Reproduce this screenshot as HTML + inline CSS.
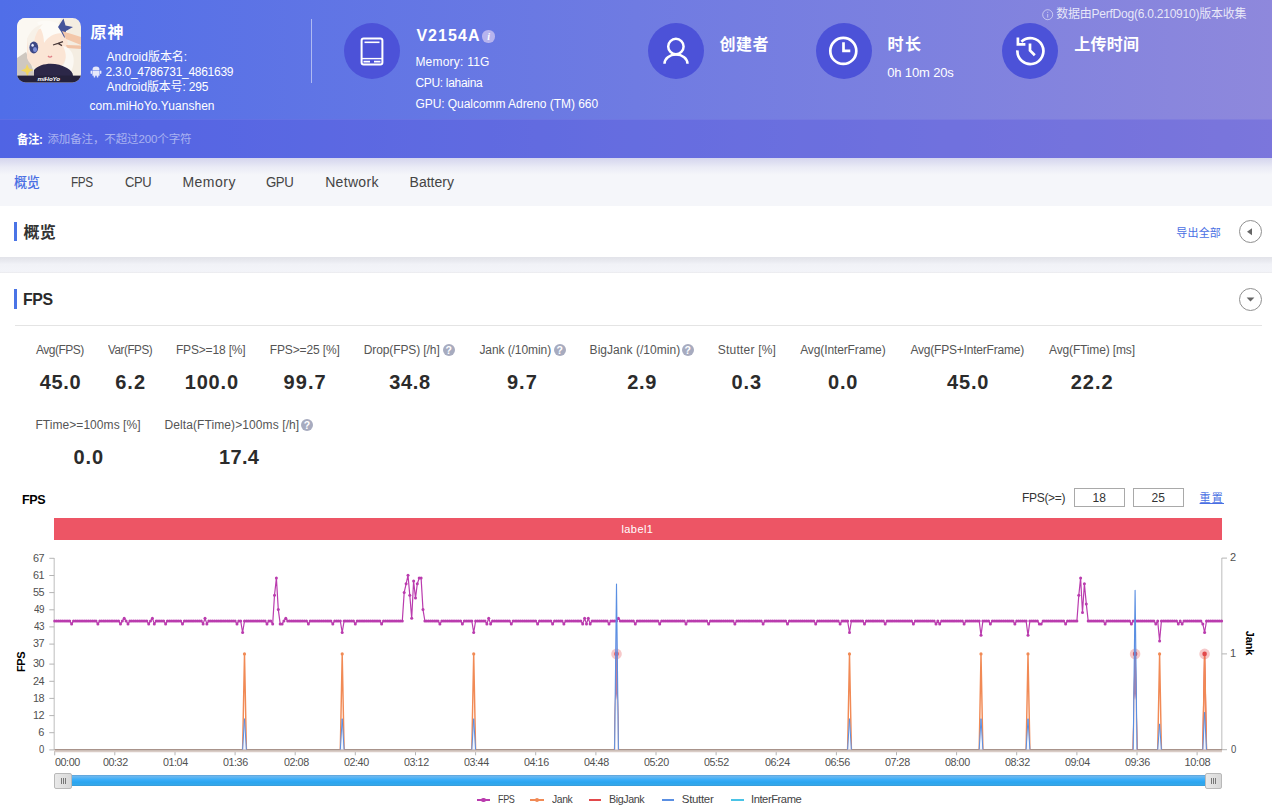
<!DOCTYPE html>
<html lang="zh-CN">
<head>
<meta charset="utf-8">
<title>PerfDog</title>
<style>
*{box-sizing:border-box;margin:0;padding:0}
html,body{width:1272px;height:809px;overflow:hidden;background:#fff}
body{font-family:"Liberation Sans","Noto Sans CJK SC",sans-serif;color:#333;position:relative}
.a{position:absolute}
.t{position:absolute;white-space:nowrap;line-height:1}
#hdr{left:0;top:0;width:1272px;height:158px;background:linear-gradient(90deg,#506ee8,#8e88dc)}
#remark{left:0;top:118.5px;width:1272px;height:39px;background:rgba(80,78,220,.31);border-top:1px solid rgba(255,255,255,.07)}
#hshadow{left:0;top:158px;width:1272px;height:17px;background:linear-gradient(180deg,rgba(110,110,200,.24) 0,rgba(110,110,200,.17) 25%,rgba(110,110,200,.08) 55%,rgba(110,110,200,0) 100%)}
.circ{width:56px;height:56px;border-radius:50%;background:#4c52d8}
#nav{left:0;top:157.5px;width:1272px;height:48px;background:#f5f6fa}
#sec1{left:0;top:205.5px;width:1272px;height:51.5px;background:#fff}
#gap{left:0;top:257px;width:1272px;height:15.6px;background:linear-gradient(180deg,#e2e3e9 0,#e9eaf0 25%,#f1f2f7 45%,#f3f4f9 90%,#e9e9ed 100%)}
.bar{width:3px;background:#4a74e6}
.q{width:12px;height:12px;border-radius:50%;background:#a7abbf;color:#fff;font-size:10.5px;font-weight:bold;line-height:12px;text-align:center}
.cbtn{width:23px;height:23px;border-radius:50%;border:1px solid #8f8f8f;background:#fff}
.inp{height:19px;width:51px;border:1px solid #a9a9a9;background:#fff}
.grip{width:17.5px;height:16px;background:linear-gradient(90deg,#e9e9e9,#d8d8d8);border:1px solid #b9b9b9;border-radius:2px}
.grip:after{content:"";position:absolute;left:5.5px;top:4.5px;width:1px;height:6px;background:#777;box-shadow:2px 0 0 #777,4px 0 0 #777}
</style>
</head>
<body>

<div class="a" id="hdr"></div>
<div class="a" id="remark"></div>
<div class="a" id="nav"></div>
<div class="a" id="hshadow"></div>
<div class="a" id="sec1"></div>
<div class="a" id="gap"></div>

<!-- app icon -->
<svg class="a" style="left:17px;top:18px" width="64" height="65" viewBox="0 0 64 65">
<defs><clipPath id="ic"><rect x="0" y="0" width="64" height="64.5" rx="8.5"/></clipPath></defs>
<g clip-path="url(#ic)">
<rect width="64" height="65" fill="#f4ede2"/>
<path d="M0 0H44L40 10C30 6 18 12 12 24L8 44L0 50Z" fill="#fbf8f2"/>
<path d="M0 40L9 34L14 46L18 58H0Z" fill="#cfc8c0"/>
<path d="M10 22C14 10 34 6 46 14C54 22 52 42 42 50C32 56 14 52 10 40Z" fill="#fbe5d5"/>
<path d="M20 4C34 0 48 6 54 20C46 12 34 14 27 25C27 15 23 9 20 4Z" fill="#fdfbf7"/>
<path d="M10 22C12 14 18 8 26 6C20 12 17 20 17 26L12 36Z" fill="#f7f1e8"/>
<ellipse cx="16.8" cy="29.6" rx="4.4" ry="6" fill="#3d4784"/>
<ellipse cx="18" cy="31.5" rx="2" ry="2.6" fill="#7f8fd8"/>
<ellipse cx="15.6" cy="27.2" rx="1.2" ry="1.5" fill="#e8ecff"/>
<path d="M36 27L41 25.4L46 23.6M41 25.4L45 27.6" stroke="#4a3a3a" stroke-width="1.2" fill="none"/>
<path d="M31 38Q33 40.4 35 38" stroke="#e07f86" stroke-width="1.3" fill="none"/>
<path d="M41 9L46.5 0.5L48.5 7.5L56 9L49 13L47.5 20L44 13.5Z" fill="#44549a"/>
<path d="M45 13L64 19V27L49 21Z" fill="#f3c7aa"/>
<path d="M49 27L64 27.5V31L50 30Z" fill="#f1c3a6"/>
<path d="M46 28C56 30 60 42 54 54L44 50C50 44 50 36 46 28Z" fill="#fbf8f3"/>
<path d="M17 52C24 44 40 44 50 50C54 52 56 55 56 58H17Z" fill="#2c2748"/>
<path d="M10 46L12 50.5L16.5 52L12 54L10.5 58.5L8.5 54L4 52.5L8.5 50.5Z" fill="#f2d65f"/>
<rect x="0" y="57.6" width="64" height="8" fill="#25213b"/>
</g>
</svg>
<div class="t" style="left:37.5px;top:75.8px;font-size:6.2px;font-weight:bold;font-style:italic;color:#fff;letter-spacing:-.1px">miHoYo</div>
<!-- android icon -->
<svg class="a" style="left:89.5px;top:65.5px" width="12" height="12" viewBox="0 0 12 12"><g fill="#e6e8fb">
<path d="M2.4 4.4H9.6V9.2Q9.6 9.8 9 9.8H3Q2.4 9.8 2.4 9.2Z"/><path d="M2.5 3.9A3.5 3.3 0 0 1 9.5 3.9Z"/>
<rect x=".6" y="4.4" width="1.4" height="3.6" rx=".7"/><rect x="10" y="4.4" width="1.4" height="3.6" rx=".7"/>
<rect x="3.7" y="9" width="1.5" height="2.6" rx=".7"/><rect x="6.8" y="9" width="1.5" height="2.6" rx=".7"/></g></svg>
<div class="a" style="left:311px;top:18.5px;width:1px;height:64px;background:rgba(255,255,255,.5)"></div>
<!-- circles -->
<div class="a circ" style="left:344px;top:23px"></div>
<div class="a circ" style="left:648px;top:23px"></div>
<div class="a circ" style="left:816px;top:23px"></div>
<div class="a circ" style="left:1002px;top:23px"></div>
<!-- device icon -->
<svg class="a" style="left:344px;top:23px" width="56" height="56" viewBox="0 0 56 56" fill="none" stroke="#fff" stroke-width="2">
<rect x="17.6" y="15.5" width="20.8" height="26" rx="2"/><path d="M20.5 19.3H35.5" stroke-width="1.6"/><path d="M18 35.6H38" stroke-width="1.4"/><path d="M19.5 38.6H26M30 38.6H36.5" stroke-width="1.6"/></svg>
<!-- user icon -->
<svg class="a" style="left:648px;top:23px" width="56" height="56" viewBox="0 0 56 56" fill="none" stroke="#fff" stroke-width="2.5">
<circle cx="27.9" cy="23.5" r="7.7"/><path d="M16.5 40.8A11.5 9.2 0 0 1 39.5 40.8"/></svg>
<!-- clock icon -->
<svg class="a" style="left:816px;top:23px" width="56" height="56" viewBox="0 0 56 56" fill="none" stroke="#fff" stroke-width="2.7">
<circle cx="27.3" cy="27.9" r="13"/><path d="M27.5 19.2V27.8H34.3"/></svg>
<!-- history icon -->
<svg class="a" style="left:1002px;top:23px" width="56" height="56" viewBox="0 0 56 56" fill="none" stroke="#fff" stroke-width="2.7">
<path d="M15.4 27.4A13 13 0 1 0 19.4 18.7"/><path d="M15.9 14.6V21.4H23.4"/><path d="M28 20.6V27.5L32.8 32.3"/></svg>
<!-- info icons -->
<div class="a" style="left:482.3px;top:30.2px;width:12.4px;height:12.4px;border-radius:50%;background:#b7b4ee"></div>
<div class="t" style="left:487.3px;top:31.6px;font-size:10px;font-style:italic;font-weight:bold;color:#fff;font-family:'Liberation Serif',serif">i</div>
<svg class="a" style="left:1042px;top:9px" width="12" height="12" viewBox="0 0 12 12" fill="none" stroke="rgba(255,255,255,.55)" stroke-width="1"><circle cx="5.7" cy="5.7" r="5"/><path d="M5.7 5V8.6M5.7 2.8V3.9"/></svg>

<div class="a bar" style="left:14px;top:222px;height:19px"></div>
<div class="a bar" style="left:14px;top:289px;height:20px"></div>
<div class="a cbtn" style="left:1239px;top:220px"></div>
<svg class="a" style="left:1239px;top:220px" width="23" height="23"><path d="M13 8.2V15.2L8 11.7Z" fill="#666"/></svg>
<div class="a cbtn" style="left:1239px;top:287.5px"></div>
<svg class="a" style="left:1239px;top:287.5px" width="23" height="23"><path d="M7.6 9.6H15.4L11.5 13.6Z" fill="#666"/></svg>
<div class="a" style="left:15px;top:325px;width:1247px;height:1px;background:#e4e4e4"></div>
<!-- question icons -->
<div class="a q" style="left:442.7px;top:343.7px">?</div>
<div class="a q" style="left:553.8px;top:343.7px">?</div>
<div class="a q" style="left:681.8px;top:343.7px">?</div>
<div class="a q" style="left:301px;top:418.7px">?</div>
<!-- inputs -->
<div class="a inp" style="left:1074px;top:488px"></div>
<div class="a inp" style="left:1133px;top:488px"></div>
<!-- label bar -->
<div class="a" style="left:54px;top:518px;width:1168px;height:22px;background:#ed5565"></div>
<!-- chart -->
<svg class="a" style="left:0;top:0" width="1272" height="809" viewBox="0 0 1272 809">
<defs><marker id="mk" markerWidth="4" markerHeight="4" refX="2" refY="2" markerUnits="userSpaceOnUse"><circle cx="2" cy="2" r="1.5" fill="#ba3cae"/></marker><linearGradient id="tg" gradientUnits="userSpaceOnUse" x1="0" y1="584" x2="0" y2="750"><stop offset="0" stop-color="#9678d7" stop-opacity=".2"/><stop offset=".2" stop-color="#9678d7" stop-opacity=".55"/><stop offset=".66" stop-color="#9678d7" stop-opacity=".55"/><stop offset=".7" stop-color="#f4f6ff" stop-opacity=".8"/><stop offset="1" stop-color="#fff" stop-opacity=".85"/></linearGradient></defs>
<path d="M54.2 558V750M1221.8 558V750" stroke="#c8c8c8" stroke-width="1.2" fill="none"/>
<path d="M49.3 558.3H54.2M49.3 575.5H54.2M49.3 592.6H54.2M49.3 609.8H54.2M49.3 626.9H54.2M49.3 644.1H54.2M49.3 664.1H54.2M49.3 681.3H54.2M49.3 698.4H54.2M49.3 715.6H54.2M49.3 732.7H54.2M49.3 749.9H54.2M1221.8 558.1H1227M1221.8 653.9H1227M1221.8 749.7H1227M54.7 751V755.3M114.8 751V755.3M175.0 751V755.3M235.1 751V755.3M295.2 751V755.3M355.3 751V755.3M415.5 751V755.3M475.6 751V755.3M535.7 751V755.3M595.9 751V755.3M656.0 751V755.3M716.1 751V755.3M776.2 751V755.3M836.4 751V755.3M896.5 751V755.3M956.6 751V755.3M1016.7 751V755.3M1076.9 751V755.3M1137.0 751V755.3M1197.1 751V755.3" stroke="#b4b4b4" stroke-width="1" fill="none"/>
<polyline points="54.7,621.0 56.6,621.0 58.5,621.0 60.3,621.0 62.2,621.0 64.1,621.0 66.0,621.0 67.9,621.0 69.7,621.0 71.6,623.9 73.5,621.0 75.4,621.0 77.2,621.0 79.1,621.0 81.0,621.0 82.9,621.0 84.8,621.0 86.6,621.0 88.5,621.0 90.4,621.0 92.3,621.0 94.2,621.0 96.0,621.0 97.9,623.9 99.8,621.0 101.7,621.0 103.6,621.0 105.4,621.0 107.3,621.0 109.2,621.0 111.1,621.0 112.9,621.0 114.8,621.0 116.7,621.0 118.6,621.0 120.5,623.9 122.3,621.0 124.2,618.2 126.1,621.0 128.0,623.9 129.9,621.0 131.7,621.0 133.6,621.0 135.5,621.0 137.4,621.0 139.3,621.0 141.1,621.0 143.0,621.0 144.9,621.0 146.8,621.0 148.7,623.9 150.5,621.0 152.4,618.2 154.3,623.9 156.2,621.0 158.0,621.0 159.9,621.0 161.8,621.0 163.7,621.0 165.6,623.9 167.4,621.0 169.3,621.0 171.2,621.0 173.1,621.0 175.0,621.0 176.8,621.0 178.7,621.0 180.6,621.0 182.5,623.9 184.4,621.0 186.2,621.0 188.1,621.0 190.0,621.0 191.9,621.0 193.7,621.0 195.6,621.0 197.5,621.0 199.4,621.0 201.3,621.0 203.1,623.9 205.0,618.2 206.9,623.9 208.8,621.0 210.7,621.0 212.5,621.0 214.4,621.0 216.3,621.0 218.2,621.0 220.1,621.0 221.9,621.0 223.8,621.0 225.7,621.0 227.6,621.0 229.4,621.0 231.3,621.0 233.2,621.0 235.1,621.0 237.0,623.9 238.8,621.0 240.7,621.0 242.6,632.5 244.5,621.0 246.4,621.0 248.2,621.0 250.1,621.0 252.0,621.0 253.9,621.0 255.8,621.0 257.6,621.0 259.5,621.0 261.4,621.0 263.3,621.0 265.1,621.0 267.0,623.9 268.9,621.0 270.8,621.0 272.7,623.9 274.5,595.3 276.4,578.1 278.3,609.6 280.2,623.9 282.1,623.9 283.9,621.0 285.8,618.2 287.7,621.0 289.6,621.0 291.5,621.0 293.3,621.0 295.2,621.0 297.1,621.0 299.0,621.0 300.8,621.0 302.7,621.0 304.6,621.0 306.5,621.0 308.4,623.9 310.2,621.0 312.1,621.0 314.0,621.0 315.9,621.0 317.8,621.0 319.6,621.0 321.5,621.0 323.4,621.0 325.3,621.0 327.2,621.0 329.0,621.0 330.9,621.0 332.8,623.9 334.7,621.0 336.6,621.0 338.4,621.0 340.3,621.0 342.2,632.5 344.1,621.0 345.9,621.0 347.8,621.0 349.7,621.0 351.6,621.0 353.5,621.0 355.3,623.9 357.2,621.0 359.1,621.0 361.0,621.0 362.9,621.0 364.7,621.0 366.6,621.0 368.5,621.0 370.4,621.0 372.3,621.0 374.1,621.0 376.0,621.0 377.9,621.0 379.8,621.0 381.6,623.9 383.5,621.0 385.4,621.0 387.3,621.0 389.2,621.0 391.0,621.0 392.9,621.0 394.8,621.0 396.7,621.0 398.6,621.0 400.4,621.0 402.3,621.0 404.2,592.4 406.1,583.8 408.0,575.3 409.8,595.3 411.7,618.2 413.6,581.0 415.5,598.1 417.3,583.8 419.2,578.1 421.1,578.1 423.0,609.6 424.9,621.0 426.7,621.0 428.6,621.0 430.5,621.0 432.4,621.0 434.3,621.0 436.1,621.0 438.0,621.0 439.9,623.9 441.8,621.0 443.7,621.0 445.5,621.0 447.4,621.0 449.3,621.0 451.2,621.0 453.0,621.0 454.9,621.0 456.8,621.0 458.7,621.0 460.6,621.0 462.4,623.9 464.3,621.0 466.2,621.0 468.1,621.0 470.0,621.0 471.8,621.0 473.7,632.5 475.6,621.0 477.5,621.0 479.4,621.0 481.2,621.0 483.1,621.0 485.0,621.0 486.9,623.9 488.7,618.2 490.6,623.9 492.5,621.0 494.4,621.0 496.3,621.0 498.1,621.0 500.0,621.0 501.9,621.0 503.8,621.0 505.7,621.0 507.5,621.0 509.4,621.0 511.3,623.9 513.2,621.0 515.1,621.0 516.9,621.0 518.8,621.0 520.7,621.0 522.6,621.0 524.5,621.0 526.3,621.0 528.2,621.0 530.1,621.0 532.0,621.0 533.8,621.0 535.7,621.0 537.6,623.9 539.5,621.0 541.4,621.0 543.2,621.0 545.1,621.0 547.0,621.0 548.9,621.0 550.8,621.0 552.6,623.9 554.5,621.0 556.4,621.0 558.3,621.0 560.2,621.0 562.0,621.0 563.9,623.9 565.8,621.0 567.7,621.0 569.5,621.0 571.4,621.0 573.3,621.0 575.2,621.0 577.1,621.0 578.9,621.0 580.8,621.0 582.7,623.9 584.6,618.2 586.5,623.9 588.3,618.2 590.2,623.9 592.1,621.0 594.0,621.0 595.9,621.0 597.7,621.0 599.6,621.0 601.5,621.0 603.4,621.0 605.2,621.0 607.1,621.0 609.0,623.9 610.9,621.0 612.8,621.0 614.6,621.0 616.5,621.0 618.4,618.2 620.3,621.0 622.2,621.0 624.0,621.0 625.9,621.0 627.8,621.0 629.7,621.0 631.6,621.0 633.4,621.0 635.3,623.9 637.2,621.0 639.1,621.0 640.9,621.0 642.8,621.0 644.7,621.0 646.6,621.0 648.5,621.0 650.3,621.0 652.2,621.0 654.1,621.0 656.0,621.0 657.9,621.0 659.7,623.9 661.6,621.0 663.5,621.0 665.4,621.0 667.3,621.0 669.1,621.0 671.0,621.0 672.9,621.0 674.8,621.0 676.6,621.0 678.5,621.0 680.4,621.0 682.3,621.0 684.2,621.0 686.0,623.9 687.9,621.0 689.8,621.0 691.7,621.0 693.6,621.0 695.4,621.0 697.3,621.0 699.2,621.0 701.1,621.0 703.0,621.0 704.8,621.0 706.7,621.0 708.6,623.9 710.5,621.0 712.4,621.0 714.2,621.0 716.1,621.0 718.0,621.0 719.9,621.0 721.7,621.0 723.6,621.0 725.5,621.0 727.4,621.0 729.3,621.0 731.1,621.0 733.0,621.0 734.9,623.9 736.8,621.0 738.7,621.0 740.5,621.0 742.4,621.0 744.3,621.0 746.2,621.0 748.1,621.0 749.9,621.0 751.8,621.0 753.7,621.0 755.6,621.0 757.4,621.0 759.3,621.0 761.2,621.0 763.1,623.9 765.0,621.0 766.8,621.0 768.7,621.0 770.6,621.0 772.5,621.0 774.4,621.0 776.2,621.0 778.1,621.0 780.0,621.0 781.9,621.0 783.8,621.0 785.6,621.0 787.5,623.9 789.4,621.0 791.3,621.0 793.1,621.0 795.0,621.0 796.9,621.0 798.8,621.0 800.7,621.0 802.5,621.0 804.4,621.0 806.3,621.0 808.2,621.0 810.1,621.0 811.9,621.0 813.8,621.0 815.7,623.9 817.6,621.0 819.5,621.0 821.3,621.0 823.2,621.0 825.1,621.0 827.0,621.0 828.8,621.0 830.7,621.0 832.6,621.0 834.5,621.0 836.4,621.0 838.2,621.0 840.1,623.9 842.0,621.0 843.9,621.0 845.8,621.0 847.6,621.0 849.5,632.5 851.4,621.0 853.3,621.0 855.2,621.0 857.0,621.0 858.9,621.0 860.8,621.0 862.7,621.0 864.5,623.9 866.4,621.0 868.3,621.0 870.2,621.0 872.1,621.0 873.9,621.0 875.8,621.0 877.7,621.0 879.6,621.0 881.5,621.0 883.3,621.0 885.2,623.9 887.1,621.0 889.0,621.0 890.9,621.0 892.7,621.0 894.6,621.0 896.5,621.0 898.4,621.0 900.2,621.0 902.1,621.0 904.0,621.0 905.9,621.0 907.8,621.0 909.6,621.0 911.5,621.0 913.4,623.9 915.3,621.0 917.2,621.0 919.0,621.0 920.9,621.0 922.8,621.0 924.7,621.0 926.6,621.0 928.4,621.0 930.3,621.0 932.2,621.0 934.1,621.0 936.0,623.9 937.8,621.0 939.7,623.9 941.6,621.0 943.5,621.0 945.3,621.0 947.2,621.0 949.1,621.0 951.0,621.0 952.9,621.0 954.7,621.0 956.6,621.0 958.5,621.0 960.4,621.0 962.3,621.0 964.1,623.9 966.0,621.0 967.9,621.0 969.8,621.0 971.7,621.0 973.5,621.0 975.4,621.0 977.3,621.0 979.2,621.0 981.0,635.3 982.9,621.0 984.8,621.0 986.7,621.0 988.6,621.0 990.4,623.9 992.3,621.0 994.2,621.0 996.1,621.0 998.0,621.0 999.8,621.0 1001.7,621.0 1003.6,621.0 1005.5,621.0 1007.4,621.0 1009.2,621.0 1011.1,621.0 1013.0,621.0 1014.9,623.9 1016.7,621.0 1018.6,621.0 1020.5,621.0 1022.4,621.0 1024.3,621.0 1026.1,621.0 1028.0,635.3 1029.9,621.0 1031.8,621.0 1033.7,621.0 1035.5,621.0 1037.4,621.0 1039.3,623.9 1041.2,623.9 1043.1,621.0 1044.9,621.0 1046.8,621.0 1048.7,621.0 1050.6,621.0 1052.4,621.0 1054.3,621.0 1056.2,621.0 1058.1,621.0 1060.0,621.0 1061.8,621.0 1063.7,621.0 1065.6,623.9 1067.5,621.0 1069.4,621.0 1071.2,621.0 1073.1,621.0 1075.0,621.0 1076.9,621.0 1078.8,595.3 1080.6,578.1 1082.5,612.4 1084.4,583.8 1086.3,603.9 1088.2,621.0 1090.0,621.0 1091.9,621.0 1093.8,621.0 1095.7,621.0 1097.5,621.0 1099.4,621.0 1101.3,621.0 1103.2,621.0 1105.1,623.9 1106.9,621.0 1108.8,621.0 1110.7,621.0 1112.6,621.0 1114.5,621.0 1116.3,621.0 1118.2,621.0 1120.1,621.0 1122.0,621.0 1123.9,621.0 1125.7,621.0 1127.6,621.0 1129.5,621.0 1131.4,623.9 1133.2,621.0 1135.1,621.0 1137.0,621.0 1138.9,621.0 1140.8,621.0 1142.6,621.0 1144.5,621.0 1146.4,621.0 1148.3,621.0 1150.2,621.0 1152.0,621.0 1153.9,621.0 1155.8,623.9 1157.7,621.0 1159.6,641.0 1161.4,621.0 1163.3,621.0 1165.2,621.0 1167.1,621.0 1168.9,621.0 1170.8,621.0 1172.7,621.0 1174.6,621.0 1176.5,621.0 1178.3,623.9 1180.2,621.0 1182.1,623.9 1184.0,621.0 1185.9,621.0 1187.7,621.0 1189.6,621.0 1191.5,621.0 1193.4,621.0 1195.3,621.0 1197.1,621.0 1199.0,621.0 1200.9,621.0 1202.8,623.9 1204.6,632.5 1206.5,621.0 1208.4,621.0 1210.3,621.0 1212.2,621.0 1214.0,621.0 1215.9,621.0 1217.8,621.0 1219.7,621.0 1221.6,621.0" fill="none" stroke="#ba3cae" stroke-width="1.2" stroke-linejoin="round" marker-start="url(#mk)" marker-mid="url(#mk)" marker-end="url(#mk)"/>
<path d="M54.5 751.1H1222" stroke="#d9ccc6" stroke-width="2.2" fill="none"/><path d="M54.5 749.6H1222" stroke="#a8938b" stroke-width="1.3" fill="none"/>
<path d="M614.6 749.7L616.5 653.9L618.4 749.7M1133.2 749.7L1135.1 653.9L1137.0 749.7M1202.8 749.7L1204.6 653.9L1206.5 749.7" fill="none" stroke="#e2494b" stroke-width="1.3" stroke-linejoin="round"/>
<path d="M242.6 749.7L244.5 653.9L246.4 749.7M340.3 749.7L342.2 653.9L344.1 749.7M471.8 749.7L473.7 653.9L475.6 749.7M614.6 749.7L616.5 653.9L618.4 749.7M847.6 749.7L849.5 653.9L851.4 749.7M979.2 749.7L981.0 653.9L982.9 749.7M1026.1 749.7L1028.0 653.9L1029.9 749.7M1133.2 749.7L1135.1 653.9L1137.0 749.7M1157.7 749.7L1159.6 653.9L1161.4 749.7M1202.8 749.7L1204.6 653.9L1206.5 749.7" fill="none" stroke="#f18a55" stroke-width="1.45" stroke-linejoin="round"/>
<circle cx="244.5" cy="653.9" r="1.6" fill="#f18a55"/>
<circle cx="342.2" cy="653.9" r="1.6" fill="#f18a55"/>
<circle cx="473.7" cy="653.9" r="1.6" fill="#f18a55"/>
<circle cx="849.5" cy="653.9" r="1.6" fill="#f18a55"/>
<circle cx="981.0" cy="653.9" r="1.6" fill="#f18a55"/>
<circle cx="1028.0" cy="653.9" r="1.6" fill="#f18a55"/>
<circle cx="1159.6" cy="653.9" r="1.6" fill="#f18a55"/>
<circle cx="616.5" cy="653.9" r="5.3" fill="#e2494b" fill-opacity=".3"/><circle cx="616.5" cy="653.9" r="2.3" fill="#e2494b"/>
<circle cx="1135.1" cy="653.9" r="5.3" fill="#e2494b" fill-opacity=".3"/><circle cx="1135.1" cy="653.9" r="2.3" fill="#e2494b"/>
<circle cx="1204.6" cy="653.9" r="5.3" fill="#e2494b" fill-opacity=".3"/><circle cx="1204.6" cy="653.9" r="2.3" fill="#e2494b"/>
<path d="M242.6 749.7L244.5 718.7L246.4 749.7M340.3 749.7L342.2 718.7L344.1 749.7M471.8 749.7L473.7 718.7L475.6 749.7M847.6 749.7L849.5 718.7L851.4 749.7M979.2 749.7L981.0 718.7L982.9 749.7M1026.1 749.7L1028.0 718.7L1029.9 749.7M1157.7 749.7L1159.6 723.9L1161.4 749.7M1202.8 749.7L1204.6 712.2L1206.5 749.7" fill="rgba(235,242,255,.7)" stroke="#5a8fe2" stroke-width="1" stroke-linejoin="round"/>
<path d="M614.6 749.7L616.5 584.0L618.4 749.7M1133.2 749.7L1135.1 590.2L1137.0 749.7" fill="url(#tg)" stroke="#5a8fe2" stroke-width="1.1" stroke-linejoin="round"/>
</svg>
<!-- scrollbar -->
<div class="a" style="left:55px;top:775px;width:1166px;height:11px;background:linear-gradient(180deg,#5e9ed2 0,#6bb8f0 12%,#3aaef9 42%,#2ba5f0 66%,#33a8ea 88%,#3a98d4 100%)"></div>
<div class="a grip" style="left:54px;top:772.5px"></div>
<div class="a grip" style="left:1204.5px;top:772.5px"></div>
<div class="t" style="left:90.4px;top:24.5px;font-size:16px;letter-spacing:1.10px;color:#fff;font-weight:bold;">原神</div>
<div class="t" style="left:106.6px;top:51.0px;font-size:12px;letter-spacing:-0.01px;color:#fff;">Android版本名:</div>
<div class="t" style="left:105.6px;top:65.8px;font-size:12px;letter-spacing:-0.28px;color:#fff;">2.3.0_4786731_4861639</div>
<div class="t" style="left:106.6px;top:80.8px;font-size:12px;letter-spacing:-0.15px;color:#fff;">Android版本号: 295</div>
<div class="t" style="left:89.5px;top:100.0px;font-size:12px;letter-spacing:0.04px;color:#fff;">com.miHoYo.Yuanshen</div>
<div class="t" style="left:416.4px;top:28.1px;font-size:16px;letter-spacing:1.06px;color:#fff;font-weight:bold;">V2154A</div>
<div class="t" style="left:415.4px;top:56.4px;font-size:12px;letter-spacing:0.22px;color:#fff;">Memory: 11G</div>
<div class="t" style="left:415.4px;top:77.1px;font-size:12px;letter-spacing:-0.31px;color:#fff;">CPU: lahaina</div>
<div class="t" style="left:415.4px;top:97.9px;font-size:12px;letter-spacing:-0.05px;color:#fff;">GPU: Qualcomm Adreno (TM) 660</div>
<div class="t" style="left:719.4px;top:36.8px;font-size:16px;letter-spacing:0.60px;color:#fff;font-weight:bold;">创建者</div>
<div class="t" style="left:887.6px;top:37.0px;font-size:16px;letter-spacing:1.30px;color:#fff;font-weight:bold;">时长</div>
<div class="t" style="left:887.2px;top:66.3px;font-size:13px;letter-spacing:-0.14px;color:#fff;">0h 10m 20s</div>
<div class="t" style="left:1074.3px;top:37.3px;font-size:16px;letter-spacing:0.27px;color:#fff;font-weight:bold;">上传时间</div>
<div class="t" style="left:1056.2px;top:8.2px;font-size:12px;letter-spacing:-0.23px;color:rgba(255,255,255,.82);">数据由PerfDog(6.0.210910)版本收集</div>
<div class="t" style="left:16.6px;top:133.6px;font-size:12px;letter-spacing:-0.45px;color:#fff;font-weight:bold;transform:scaleX(0.950);transform-origin:0 0;">备注:</div>
<div class="t" style="left:47.5px;top:134.1px;font-size:11.5px;letter-spacing:-0.13px;color:rgba(255,255,255,.5);">添加备注，不超过200个字符</div>
<div class="t" style="left:14.2px;top:176.0px;font-size:13.5px;letter-spacing:-0.45px;color:#4a6fe3;font-weight:500;transform:scaleX(0.971);transform-origin:0 0;">概览</div>
<div class="t" style="left:70.9px;top:174.8px;font-size:14px;letter-spacing:-0.45px;color:#444;transform:scaleX(0.841);transform-origin:0 0;">FPS</div>
<div class="t" style="left:124.6px;top:174.8px;font-size:14px;letter-spacing:-0.45px;color:#444;transform:scaleX(0.926);transform-origin:0 0;">CPU</div>
<div class="t" style="left:182.4px;top:174.8px;font-size:14px;letter-spacing:0.50px;color:#444;">Memory</div>
<div class="t" style="left:266.3px;top:174.8px;font-size:14px;letter-spacing:-0.45px;color:#444;transform:scaleX(0.945);transform-origin:0 0;">GPU</div>
<div class="t" style="left:325.2px;top:174.8px;font-size:14px;letter-spacing:0.32px;color:#444;">Network</div>
<div class="t" style="left:409.6px;top:174.8px;font-size:14px;letter-spacing:0.00px;color:#444;">Battery</div>
<div class="t" style="left:23.6px;top:225.0px;font-size:16px;letter-spacing:0.10px;color:#333;font-weight:bold;">概览</div>
<div class="t" style="left:22.9px;top:290.8px;font-size:16.5px;letter-spacing:-0.45px;color:#2a2a2a;font-weight:bold;transform:scaleX(0.962);transform-origin:0 0;">FPS</div>
<div class="t" style="left:1176.3px;top:227.5px;font-size:11px;letter-spacing:0.17px;color:#4a6fe3;">导出全部</div>
<div class="t" style="left:36.0px;top:344.2px;font-size:12px;letter-spacing:-0.51px;color:#555;">Avg(FPS)</div>
<div class="t" style="left:108.2px;top:344.2px;font-size:12px;letter-spacing:-0.45px;color:#555;transform:scaleX(0.972);transform-origin:0 0;">Var(FPS)</div>
<div class="t" style="left:175.9px;top:344.2px;font-size:12px;letter-spacing:-0.16px;color:#555;">FPS&gt;=18 [%]</div>
<div class="t" style="left:269.7px;top:344.2px;font-size:12px;letter-spacing:-0.13px;color:#555;">FPS&gt;=25 [%]</div>
<div class="t" style="left:363.7px;top:344.2px;font-size:12px;letter-spacing:-0.10px;color:#555;">Drop(FPS) [/h]</div>
<div class="t" style="left:479.4px;top:344.2px;font-size:12px;letter-spacing:-0.08px;color:#555;">Jank (/10min)</div>
<div class="t" style="left:589.6px;top:344.2px;font-size:12px;letter-spacing:0.04px;color:#555;">BigJank (/10min)</div>
<div class="t" style="left:717.8px;top:344.2px;font-size:12px;letter-spacing:0.21px;color:#555;">Stutter [%]</div>
<div class="t" style="left:800.2px;top:344.2px;font-size:12px;letter-spacing:-0.12px;color:#555;">Avg(InterFrame)</div>
<div class="t" style="left:910.5px;top:344.2px;font-size:12px;letter-spacing:-0.21px;color:#555;">Avg(FPS+InterFrame)</div>
<div class="t" style="left:1049.0px;top:344.2px;font-size:12px;letter-spacing:-0.14px;color:#555;">Avg(FTime) [ms]</div>
<div class="t" style="left:35.4px;top:419.2px;font-size:12px;letter-spacing:0.06px;color:#555;">FTime&gt;=100ms [%]</div>
<div class="t" style="left:164.4px;top:419.2px;font-size:12px;letter-spacing:0.10px;color:#555;">Delta(FTime)&gt;100ms [/h]</div>
<div class="t" style="left:39.8px;top:371.6px;font-size:20px;letter-spacing:0.63px;color:#2b2b2b;font-weight:bold;">45.0</div>
<div class="t" style="left:115.2px;top:371.6px;font-size:20px;letter-spacing:1.05px;color:#2b2b2b;font-weight:bold;">6.2</div>
<div class="t" style="left:184.7px;top:371.6px;font-size:20px;letter-spacing:0.83px;color:#2b2b2b;font-weight:bold;">100.0</div>
<div class="t" style="left:283.6px;top:371.6px;font-size:20px;letter-spacing:1.03px;color:#2b2b2b;font-weight:bold;">99.7</div>
<div class="t" style="left:389.2px;top:371.6px;font-size:20px;letter-spacing:0.70px;color:#2b2b2b;font-weight:bold;">34.8</div>
<div class="t" style="left:506.9px;top:371.6px;font-size:20px;letter-spacing:1.05px;color:#2b2b2b;font-weight:bold;">9.7</div>
<div class="t" style="left:627.2px;top:371.6px;font-size:20px;letter-spacing:0.75px;color:#2b2b2b;font-weight:bold;">2.9</div>
<div class="t" style="left:731.5px;top:371.6px;font-size:20px;letter-spacing:0.95px;color:#2b2b2b;font-weight:bold;">0.3</div>
<div class="t" style="left:828.1px;top:371.6px;font-size:20px;letter-spacing:0.75px;color:#2b2b2b;font-weight:bold;">0.0</div>
<div class="t" style="left:947.0px;top:371.6px;font-size:20px;letter-spacing:0.83px;color:#2b2b2b;font-weight:bold;">45.0</div>
<div class="t" style="left:1070.8px;top:371.6px;font-size:20px;letter-spacing:0.93px;color:#2b2b2b;font-weight:bold;">22.2</div>
<div class="t" style="left:73.6px;top:446.6px;font-size:20px;letter-spacing:0.85px;color:#2b2b2b;font-weight:bold;">0.0</div>
<div class="t" style="left:219.0px;top:446.6px;font-size:20px;letter-spacing:0.33px;color:#2b2b2b;font-weight:bold;">17.4</div>
<div class="t" style="left:21.8px;top:492.9px;font-size:13px;letter-spacing:-0.45px;color:#000;font-weight:bold;transform:scaleX(0.965);transform-origin:0 0;">FPS</div>
<div class="t" style="left:1021.9px;top:491.8px;font-size:12px;letter-spacing:-0.28px;color:#333;">FPS(&gt;=)</div>
<div class="t" style="left:1092.5px;top:491.5px;font-size:12px;letter-spacing:0.00px;color:#333;">18</div>
<div class="t" style="left:1151.5px;top:491.5px;font-size:12px;letter-spacing:0.00px;color:#333;">25</div>
<div class="t" style="left:1199.6px;top:492.5px;font-size:11px;letter-spacing:1.20px;color:#4a6fe3;text-decoration:underline;">重置</div>
<div class="t" style="left:621.5px;top:523.8px;font-size:11px;letter-spacing:0.40px;color:#fff;">label1</div>
<div class="t" style="left:33.0px;top:552.5px;font-size:11px;letter-spacing:-0.45px;color:#505050;transform:scaleX(0.986);transform-origin:0 0;">67</div>
<div class="t" style="left:33.0px;top:569.7px;font-size:11px;letter-spacing:-0.45px;color:#505050;transform:scaleX(0.986);transform-origin:0 0;">61</div>
<div class="t" style="left:33.0px;top:586.8px;font-size:11px;letter-spacing:-0.45px;color:#505050;transform:scaleX(0.986);transform-origin:0 0;">55</div>
<div class="t" style="left:34.0px;top:604.0px;font-size:11px;letter-spacing:-0.45px;color:#505050;transform:scaleX(0.900);transform-origin:0 0;">49</div>
<div class="t" style="left:34.0px;top:621.1px;font-size:11px;letter-spacing:-0.45px;color:#505050;transform:scaleX(0.900);transform-origin:0 0;">43</div>
<div class="t" style="left:33.0px;top:638.3px;font-size:11px;letter-spacing:-0.45px;color:#505050;transform:scaleX(0.986);transform-origin:0 0;">37</div>
<div class="t" style="left:33.0px;top:658.3px;font-size:11px;letter-spacing:-0.45px;color:#505050;transform:scaleX(0.986);transform-origin:0 0;">30</div>
<div class="t" style="left:33.0px;top:675.5px;font-size:11px;letter-spacing:-0.45px;color:#505050;transform:scaleX(0.986);transform-origin:0 0;">24</div>
<div class="t" style="left:33.0px;top:692.6px;font-size:11px;letter-spacing:-0.45px;color:#505050;transform:scaleX(0.986);transform-origin:0 0;">18</div>
<div class="t" style="left:33.0px;top:709.8px;font-size:11px;letter-spacing:-0.45px;color:#505050;transform:scaleX(0.986);transform-origin:0 0;">12</div>
<div class="t" style="left:38.2px;top:726.9px;font-size:11px;letter-spacing:0.20px;color:#505050;">6</div>
<div class="t" style="left:39.2px;top:744.1px;font-size:11px;letter-spacing:-0.45px;color:#505050;transform:scaleX(0.867);transform-origin:0 0;">0</div>
<div class="t" style="left:1230.0px;top:552.3px;font-size:11px;letter-spacing:0.20px;color:#505050;">2</div>
<div class="t" style="left:1230.0px;top:648.1px;font-size:11px;letter-spacing:0.20px;color:#505050;">1</div>
<div class="t" style="left:1231.0px;top:743.8px;font-size:11px;letter-spacing:-0.45px;color:#505050;transform:scaleX(0.867);transform-origin:0 0;">0</div>
<div class="t" style="left:55.0px;top:757.2px;font-size:11px;letter-spacing:-0.45px;color:#505050;transform:scaleX(0.980);transform-origin:0 0;">00:00</div>
<div class="t" style="left:103.1px;top:757.2px;font-size:11px;letter-spacing:-0.45px;color:#505050;transform:scaleX(0.976);transform-origin:0 0;">00:32</div>
<div class="t" style="left:163.3px;top:757.2px;font-size:11px;letter-spacing:-0.45px;color:#505050;transform:scaleX(0.976);transform-origin:0 0;">01:04</div>
<div class="t" style="left:223.4px;top:757.2px;font-size:11px;letter-spacing:-0.45px;color:#505050;transform:scaleX(0.976);transform-origin:0 0;">01:36</div>
<div class="t" style="left:283.5px;top:757.2px;font-size:11px;letter-spacing:-0.45px;color:#505050;transform:scaleX(0.976);transform-origin:0 0;">02:08</div>
<div class="t" style="left:343.6px;top:757.2px;font-size:11px;letter-spacing:-0.45px;color:#505050;transform:scaleX(0.976);transform-origin:0 0;">02:40</div>
<div class="t" style="left:403.8px;top:757.2px;font-size:11px;letter-spacing:-0.45px;color:#505050;transform:scaleX(0.976);transform-origin:0 0;">03:12</div>
<div class="t" style="left:463.9px;top:757.2px;font-size:11px;letter-spacing:-0.45px;color:#505050;transform:scaleX(0.976);transform-origin:0 0;">03:44</div>
<div class="t" style="left:524.0px;top:757.2px;font-size:11px;letter-spacing:-0.45px;color:#505050;transform:scaleX(0.976);transform-origin:0 0;">04:16</div>
<div class="t" style="left:584.2px;top:757.2px;font-size:11px;letter-spacing:-0.45px;color:#505050;transform:scaleX(0.976);transform-origin:0 0;">04:48</div>
<div class="t" style="left:644.3px;top:757.2px;font-size:11px;letter-spacing:-0.45px;color:#505050;transform:scaleX(0.976);transform-origin:0 0;">05:20</div>
<div class="t" style="left:704.4px;top:757.2px;font-size:11px;letter-spacing:-0.45px;color:#505050;transform:scaleX(0.976);transform-origin:0 0;">05:52</div>
<div class="t" style="left:764.5px;top:757.2px;font-size:11px;letter-spacing:-0.45px;color:#505050;transform:scaleX(0.976);transform-origin:0 0;">06:24</div>
<div class="t" style="left:824.7px;top:757.2px;font-size:11px;letter-spacing:-0.45px;color:#505050;transform:scaleX(0.976);transform-origin:0 0;">06:56</div>
<div class="t" style="left:884.8px;top:757.2px;font-size:11px;letter-spacing:-0.45px;color:#505050;transform:scaleX(0.976);transform-origin:0 0;">07:28</div>
<div class="t" style="left:944.9px;top:757.2px;font-size:11px;letter-spacing:-0.45px;color:#505050;transform:scaleX(0.976);transform-origin:0 0;">08:00</div>
<div class="t" style="left:1005.0px;top:757.2px;font-size:11px;letter-spacing:-0.45px;color:#505050;transform:scaleX(0.976);transform-origin:0 0;">08:32</div>
<div class="t" style="left:1065.2px;top:757.2px;font-size:11px;letter-spacing:-0.45px;color:#505050;transform:scaleX(0.976);transform-origin:0 0;">09:04</div>
<div class="t" style="left:1125.3px;top:757.2px;font-size:11px;letter-spacing:-0.45px;color:#505050;transform:scaleX(0.976);transform-origin:0 0;">09:36</div>
<div class="t" style="left:1184.4px;top:757.2px;font-size:11px;letter-spacing:-0.35px;color:#505050;">10:08</div>
<div class="t" style="left:498.0px;top:794.3px;font-size:11.5px;letter-spacing:-0.45px;color:#444;transform:scaleX(0.786);transform-origin:0 0;">FPS</div>
<div class="t" style="left:552.0px;top:794.3px;font-size:11.5px;letter-spacing:-0.45px;color:#444;transform:scaleX(0.901);transform-origin:0 0;">Jank</div>
<div class="t" style="left:609.1px;top:794.3px;font-size:11.5px;letter-spacing:-0.45px;color:#444;transform:scaleX(0.933);transform-origin:0 0;">BigJank</div>
<div class="t" style="left:681.8px;top:794.3px;font-size:11.5px;letter-spacing:-0.32px;color:#444;">Stutter</div>
<div class="t" style="left:751.4px;top:794.3px;font-size:11.5px;letter-spacing:-0.45px;color:#444;transform:scaleX(0.972);transform-origin:0 0;">InterFrame</div>
<div class="t" style="left:21.4px;top:662px;font-size:11px;font-weight:bold;color:#000;letter-spacing:-.45px;transform:translate(-50%,-50%) rotate(-90deg)">FPS</div>
<div class="t" style="left:1248.7px;top:643.4px;font-size:11px;font-weight:bold;color:#000;letter-spacing:-.1px;transform:translate(-50%,-50%) rotate(90deg)">Jank</div>
<div class="a" style="left:477px;top:799px;width:12.7px;height:1.6px;background:#ba3cae"></div><div class="a" style="left:481.1px;top:797.5px;width:4.6px;height:4.6px;border-radius:50%;background:#ba3cae"></div>
<div class="a" style="left:530.2px;top:799px;width:13.8px;height:1.6px;background:#f18a55"></div><div class="a" style="left:534.8px;top:797.5px;width:4.6px;height:4.6px;border-radius:50%;background:#f18a55"></div>
<div class="a" style="left:588.8px;top:799px;width:12.7px;height:1.6px;background:#e2494b"></div>
<div class="a" style="left:661.5px;top:799px;width:12.8px;height:1.6px;background:#5a8fe2"></div>
<div class="a" style="left:731.2px;top:799px;width:12.7px;height:1.6px;background:#49c3e6"></div>

</body>
</html>
